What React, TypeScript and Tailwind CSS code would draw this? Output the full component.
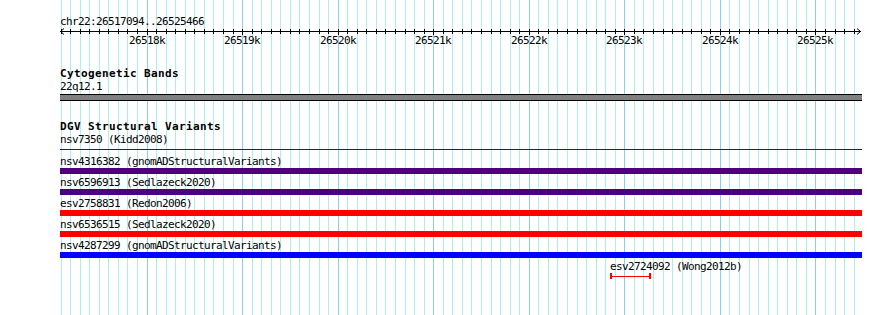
const START = 26517094;
const END = 26525466;
const X0 = 60; // left edge of the track area
const SPAN = 800; // pixels for START..END
const scale = SPAN / (END - START);
const xOf = (bp: number) => Math.round(X0 + (bp - START) * scale);

const gridStops: number[] = [];
for (let bp = Math.ceil(START / 100) * 100; bp <= END; bp += 100) gridStops.push(bp);

const variants = [
  { name: "nsv4316382 (gnomADStructuralVariants)", color: "bg-[#4b0082]" },
  { name: "nsv6596913 (Sedlazeck2020)", color: "bg-[#4b0082]" },
  { name: "esv2758831 (Redon2006)", color: "bg-[#ff0000]" },
  { name: "nsv6536515 (Sedlazeck2020)", color: "bg-[#ff0000]" },
  { name: "nsv4287299 (gnomADStructuralVariants)", color: "bg-[#0000ff]" },
];

// small variant that only covers part of the window
const wong = { name: "esv2724092 (Wong2012b)", start: 26522849, end: 26523278 };

function GridLines() {
  return (
    <svg className="absolute left-0 top-0" width={890} height={315}>
      {gridStops.map((bp) => {
        const x = xOf(bp) + 0.5;
        const major = bp % 1000 === 0;
        return (
          <line
            key={bp}
            x1={x}
            x2={x}
            y1={0}
            y2={315}
            stroke={major ? "#87cefa" : "#afeeee"}
            strokeWidth={1}
          />
        );
      })}
    </svg>
  );
}

function Ruler() {
  const right = X0 + 801;
  return (
    <svg className="block" width={890} height={20}>
      <line x1={X0} x2={right} y1={3.5} y2={3.5} stroke="#000" />
      <polyline points={`${X0 + 4},0.5 ${X0 + 0.5},3.5 ${X0 + 4},6.5`} fill="none" stroke="#000" />
      <polyline points={`${right - 4},0.5 ${right - 0.5},3.5 ${right - 4},6.5`} fill="none" stroke="#000" />
      {gridStops.map((bp) => {
        const x = xOf(bp) + 0.5;
        const major = bp % 1000 === 0;
        return <line key={bp} x1={x} x2={x} y1={1} y2={major ? 7 : 6} stroke="#000" />;
      })}
      {gridStops
        .filter((bp) => bp % 1000 === 0)
        .map((bp) => (
          <text
            key={bp}
            x={xOf(bp)}
            y={16}
            textAnchor="middle"
            className="font-['DejaVu_Sans_Mono',monospace] text-[11px] tracking-[-0.62px]"
            fill="#000"
          >
            {bp / 1000}k
          </text>
        ))}
    </svg>
  );
}

export default function App() {
  const wongLeft = xOf(wong.start);
  const wongWidth = xOf(wong.end) - wongLeft;

  return (
    <div className="relative w-[890px] h-[315px] overflow-hidden bg-white text-black font-['DejaVu_Sans_Mono',monospace] text-[11px] tracking-[-0.62px]">
      <GridLines />

      <div className="relative">
        {/* Position + ruler */}
        <div className="pt-[15px] pl-[60px] h-[28px] leading-[13px] whitespace-pre">chr22:26517094..26525466</div>
        <Ruler />

        {/* Cytogenetic bands */}
        <div className="mt-[20px] pl-[60px]">
          <div className="h-[12px] leading-[12px] font-bold tracking-[0.38px] whitespace-pre">Cytogenetic Bands</div>
          <div className="h-[13px] leading-[13px]">22q12.1</div>
          <div className="mt-[1px] w-[802px] h-[7px] border-y border-black bg-[#808080]" />
        </div>

        {/* DGV structural variants */}
        <div className="mt-[20px] pl-[60px]">
          <div className="h-[12px] leading-[12px] font-bold tracking-[0.38px] whitespace-pre">DGV Structural Variants</div>
          <div className="h-[13px] leading-[13px] whitespace-pre">nsv7350 (Kidd2008)</div>
          <div className="mt-[3px] w-[802px] h-px bg-[#4b0082]" />

          <div className="mt-[5px] flex flex-col">
            {variants.map((v) => (
              <div key={v.name} className="mb-[2px]">
                <div className="h-[13px] leading-[13px] whitespace-pre">{v.name}</div>
                <div className={`w-[802px] h-[6px] ${v.color}`} />
              </div>
            ))}
            <div style={{ marginLeft: wongLeft - X0 }}>
              <div className="h-[13px] leading-[13px] whitespace-pre">{wong.name}</div>
              <div className="flex items-center h-[6px]" style={{ width: wongWidth }}>
                <div className="w-[2px] h-[6px] bg-[#ff0000]" />
                <div className="flex-1 h-px bg-[#ff0000]" />
                <div className="w-[2px] h-[6px] bg-[#ff0000]" />
              </div>
            </div>
          </div>
        </div>
      </div>
    </div>
  );
}
